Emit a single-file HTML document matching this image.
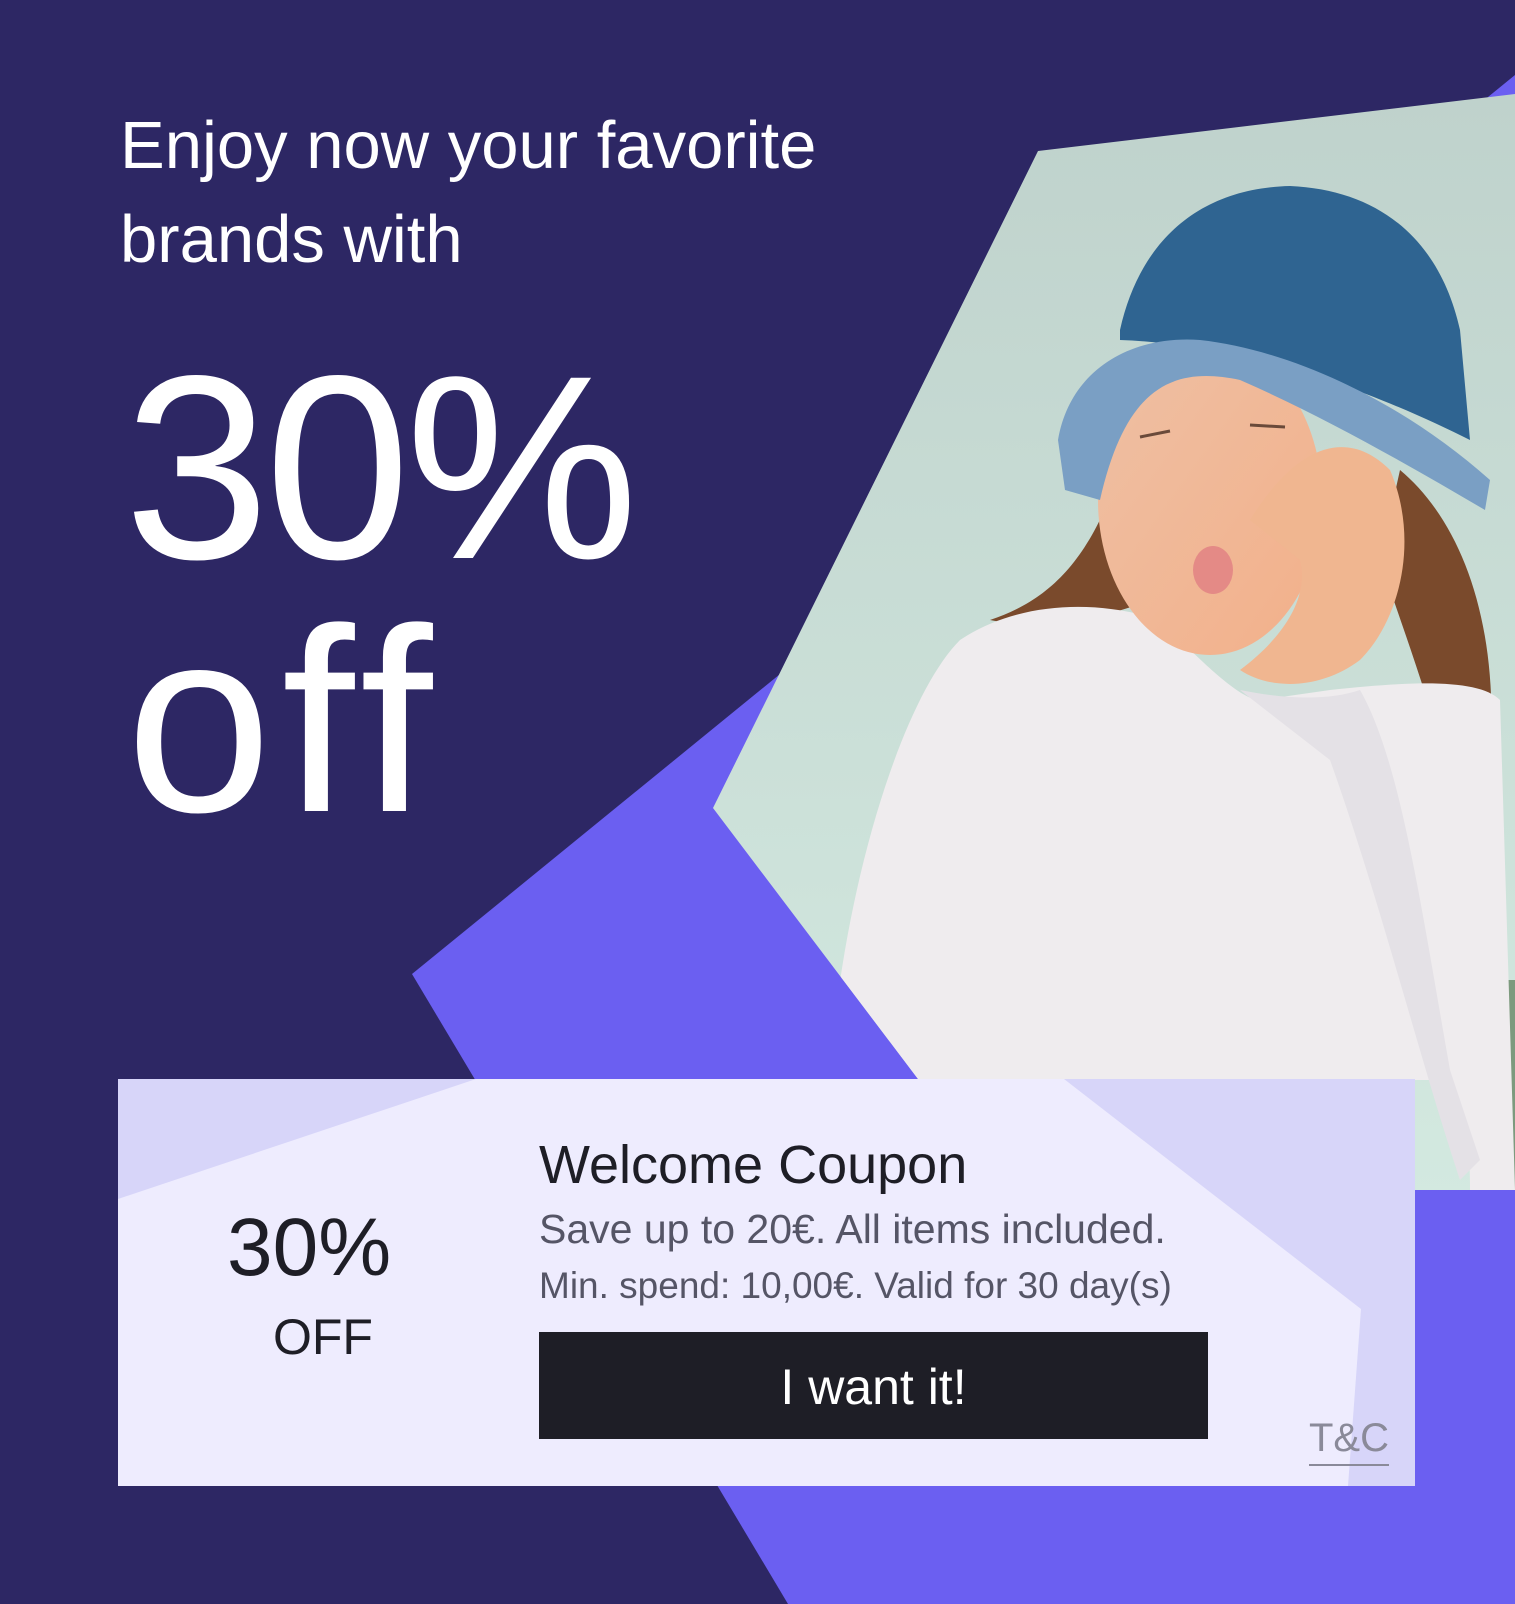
<!DOCTYPE html>
<html><head><meta charset="utf-8"><style>
html,body{margin:0;padding:0}
body{width:1515px;height:1604px;position:relative;overflow:hidden;background:#2D2764;font-family:"Liberation Sans",sans-serif}
svg{position:absolute;left:0;top:0}
.t{position:absolute;white-space:nowrap;line-height:1}
</style></head><body>
<svg width="1515" height="1604" viewBox="0 0 1515 1604">
<defs>
<linearGradient id="bg" x1="0" y1="0" x2="0" y2="1"><stop offset="0" stop-color="#bfd2cc"/><stop offset="1" stop-color="#d3e9e0"/></linearGradient>
<linearGradient id="sk" x1="0" y1="0" x2="1" y2="1"><stop offset="0" stop-color="#eec0a4"/><stop offset="1" stop-color="#f3b08a"/></linearGradient>
<clipPath id="ph"><polygon points="1038,151 1515,94 1515,1190 1415,1190 1415,1079 918,1079 713,808"/></clipPath>
</defs>
<polygon points="412,974 1515,75 1515,1604 788,1604" fill="#6B5FF1"/>
<g clip-path="url(#ph)">
<rect x="700" y="90" width="815" height="1110" fill="url(#bg)"/>
<rect x="1470" y="980" width="45" height="210" fill="#7d9a7e"/>
<path d="M1120,470 C1090,560 1050,600 990,620 C1040,630 1100,620 1150,600 Z" fill="#7a4a2c"/>
<path d="M1400,470 C1460,520 1500,620 1490,760 L1450,780 C1430,700 1400,620 1380,560 Z" fill="#7a4a2c"/>
<path d="M830,1080 C840,900 900,700 960,640 C1020,600 1100,600 1160,620 C1200,660 1240,700 1260,700 L1330,690 C1420,680 1480,680 1500,700 L1515,1190 L1470,1190 C1470,1120 1460,1080 1440,1080 Z" fill="#efecee"/>
<path d="M1240,690 C1290,700 1330,700 1360,690 C1400,760 1420,900 1450,1070 L1480,1160 L1460,1180 C1420,1060 1380,900 1330,760 Z" fill="#e4e1e6"/>
<ellipse cx="1210" cy="500" rx="112" ry="155" fill="url(#sk)"/>
<path d="M1250,520 C1300,440 1350,430 1390,470 C1420,540 1400,620 1360,660 C1320,690 1270,690 1240,670 C1280,640 1310,600 1300,560 Z" fill="#f0b690"/>
<ellipse cx="1213" cy="570" rx="20" ry="24" fill="#e48a86"/>
<path d="M1140,437 l30,-6 M1250,425 l35,2" stroke="#6a4a3a" stroke-width="3"/>
<path d="M1120,330 C1140,240 1200,188 1290,186 C1380,190 1440,240 1460,330 L1470,440 C1390,400 1260,345 1120,340 Z" fill="#2f6491"/>
<path d="M1058,440 C1070,370 1130,335 1200,340 C1290,350 1400,400 1490,480 L1485,510 C1400,460 1320,415 1240,380 C1170,365 1125,390 1100,500 L1065,490 Z" fill="#7a9fc4"/>
</g>
<rect x="118" y="1079" width="1297" height="407" fill="#D7D5F9"/>
<polygon points="118,1199 476,1079 1064,1079 1361,1309 1348,1486 118,1486" fill="#EEECFE"/>
</svg>
<div class="t" style="left:120px;top:99px;font-size:67px;color:#fff;line-height:94px">Enjoy now your favorite<br>brands with</div>
<div class="t" style="left:124px;top:340px;font-size:262px;color:#fff;letter-spacing:-5px;line-height:255px">30%</div>
<div class="t" style="left:126px;top:593px;font-size:262px;color:#fff;letter-spacing:10px;line-height:255px">off</div>
<div class="t" style="left:227px;top:1207px;font-size:82px;color:#1e1e26;letter-spacing:0px">30%</div>
<div class="t" style="left:273px;top:1312px;font-size:50px;color:#1e1e26">OFF</div>
<div class="t" style="left:539px;top:1138px;font-size:54px;color:#1e1e26">Welcome Coupon</div>
<div class="t" style="left:539px;top:1209px;font-size:41px;color:#555566">Save up to 20€. All items included.</div>
<div class="t" style="left:539px;top:1267px;font-size:37px;color:#555566">Min. spend: 10,00€. Valid for 30 day(s)</div>
<div style="position:absolute;left:539px;top:1332px;width:669px;height:107px;background:#1E1E26;color:#fff;font-size:50px;text-align:center;line-height:110px">I want it!</div>
<div class="t" style="left:1309px;top:1418px;font-size:40px;color:#8a8a99;border-bottom:2px solid #8a8a99;padding-bottom:6px">T&amp;C</div>
</body></html>
